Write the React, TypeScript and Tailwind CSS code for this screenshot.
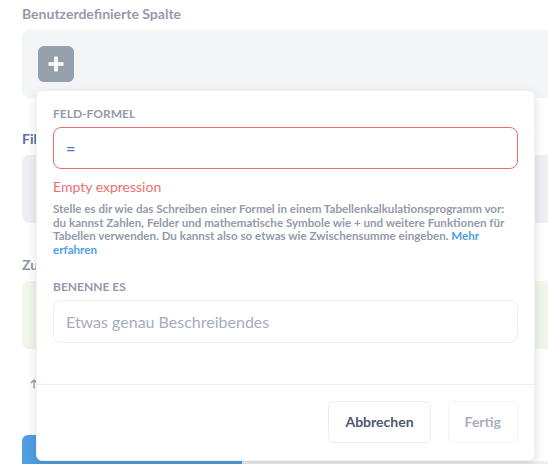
import React from "react";

function PlusIcon() {
  return (
    <svg width="16" height="16" viewBox="0 0 16 16" fill="none">
      <path d="M8 0.5v15M0.5 8h15" stroke="white" strokeWidth="3.6" />
    </svg>
  );
}

function ArrowUp() {
  return (
    <svg width="8" height="10" viewBox="0 0 8 10" fill="none">
      <path d="M4 9.5V1M1 4l3-3 3 3" stroke="#8d99a8" strokeWidth="1.3" />
    </svg>
  );
}

function Step({ label, color, bg, children }: { label: string; color: string; bg: string; children?: React.ReactNode }) {
  return (
    <div>
      <div className={`text-sm font-bold leading-5 ${color}`}>{label}</div>
      <div className={`mt-[6px] h-[68px] rounded-lg p-4 ${bg}`}>{children}</div>
    </div>
  );
}

export default function App() {
  return (
    <div className="relative h-[464px] w-[548px] overflow-hidden bg-white font-['Lato',sans-serif]">
      {/* notebook behind the popover */}
      <div className="w-[640px] pl-[22px] pt-1">
        <Step label="Benutzerdefinierte Spalte" color="text-[#949aab]" bg="bg-[#f4f5f6]">
          <button className="flex h-9 w-9 items-center justify-center rounded-md bg-[#94a1ac]">
            <PlusIcon />
          </button>
        </Step>
        <div className="mt-[31px]">
          <Step label="Filter" color="text-[#5a6fa3]" bg="bg-[#eeeef4]" />
        </div>
        <div className="mt-[32px]">
          <Step label="Zusammenfassen" color="text-[#8d99a8]" bg="bg-[#f1f6ea]" />
        </div>
        <div className="mt-[25px] flex h-5 items-center gap-1 pl-[8px] text-[11px] text-[#8d99a8]">
          <ArrowUp />
          <span>Sortieren</span>
        </div>
        <div className="mt-[41px] flex">
          <div className="h-[40px] w-[220px] rounded-tl-md bg-[#509ee3]" />
          <div className="mt-[26px] h-[14px] flex-1 bg-[#eeeff1]" />
        </div>
      </div>

      {/* expression popover */}
      <div className="absolute left-[36px] top-[90px] w-[499px] rounded-md border border-[#f0f0f0] bg-white shadow-[0_4px_12px_rgba(0,0,0,0.12)]">
        <div className="px-4 pb-[41px] pt-4">
          <div className="text-xs font-bold uppercase leading-[13px] text-[#949aab]">Feld-Formel</div>
          <div className="mt-[7px] flex h-[42px] items-center rounded-lg border border-[#ed6e6e] px-3 text-base font-bold text-[#5175b5]">
            =
          </div>
          <div className="mt-2 text-sm leading-5 text-[#ed6e6e]">Empty expression</div>
          <p className="mt-[5px] w-[454px] text-[11.6px] font-bold leading-[13.5px] text-[#949aab]">
            Stelle es dir wie das Schreiben einer Formel in einem Tabellenkalkulationsprogramm vor: du kannst Zahlen,
            Felder und mathematische Symbole wie + und weitere Funktionen für Tabellen verwenden. Du kannst also so etwas
            wie Zwischensumme eingeben. <span className="text-[#509ee3]">Mehr erfahren</span>
          </p>
          <div className="mt-6 text-xs font-bold uppercase leading-[13px] text-[#949aab]">Benenne es</div>
          <input
            readOnly
            placeholder="Etwas genau Beschreibendes"
            className="mt-[7px] h-[43px] w-full rounded-lg border border-[#eeecec] px-3 text-base text-[#4c5773] outline-none placeholder:text-[#a6adb9]"
          />
        </div>
        <div className="flex justify-end gap-[17px] border-t border-[#eeecec] px-4 pb-[17px] pt-4">
          <button className="h-[42px] rounded-md border border-[#eeecec] px-4 text-sm font-bold text-[#4c5773]">
            Abbrechen
          </button>
          <button className="h-[42px] rounded-md border border-[#f3f3f3] px-4 text-sm font-bold text-[#a9afba]">
            Fertig
          </button>
        </div>
      </div>
    </div>
  );
}
